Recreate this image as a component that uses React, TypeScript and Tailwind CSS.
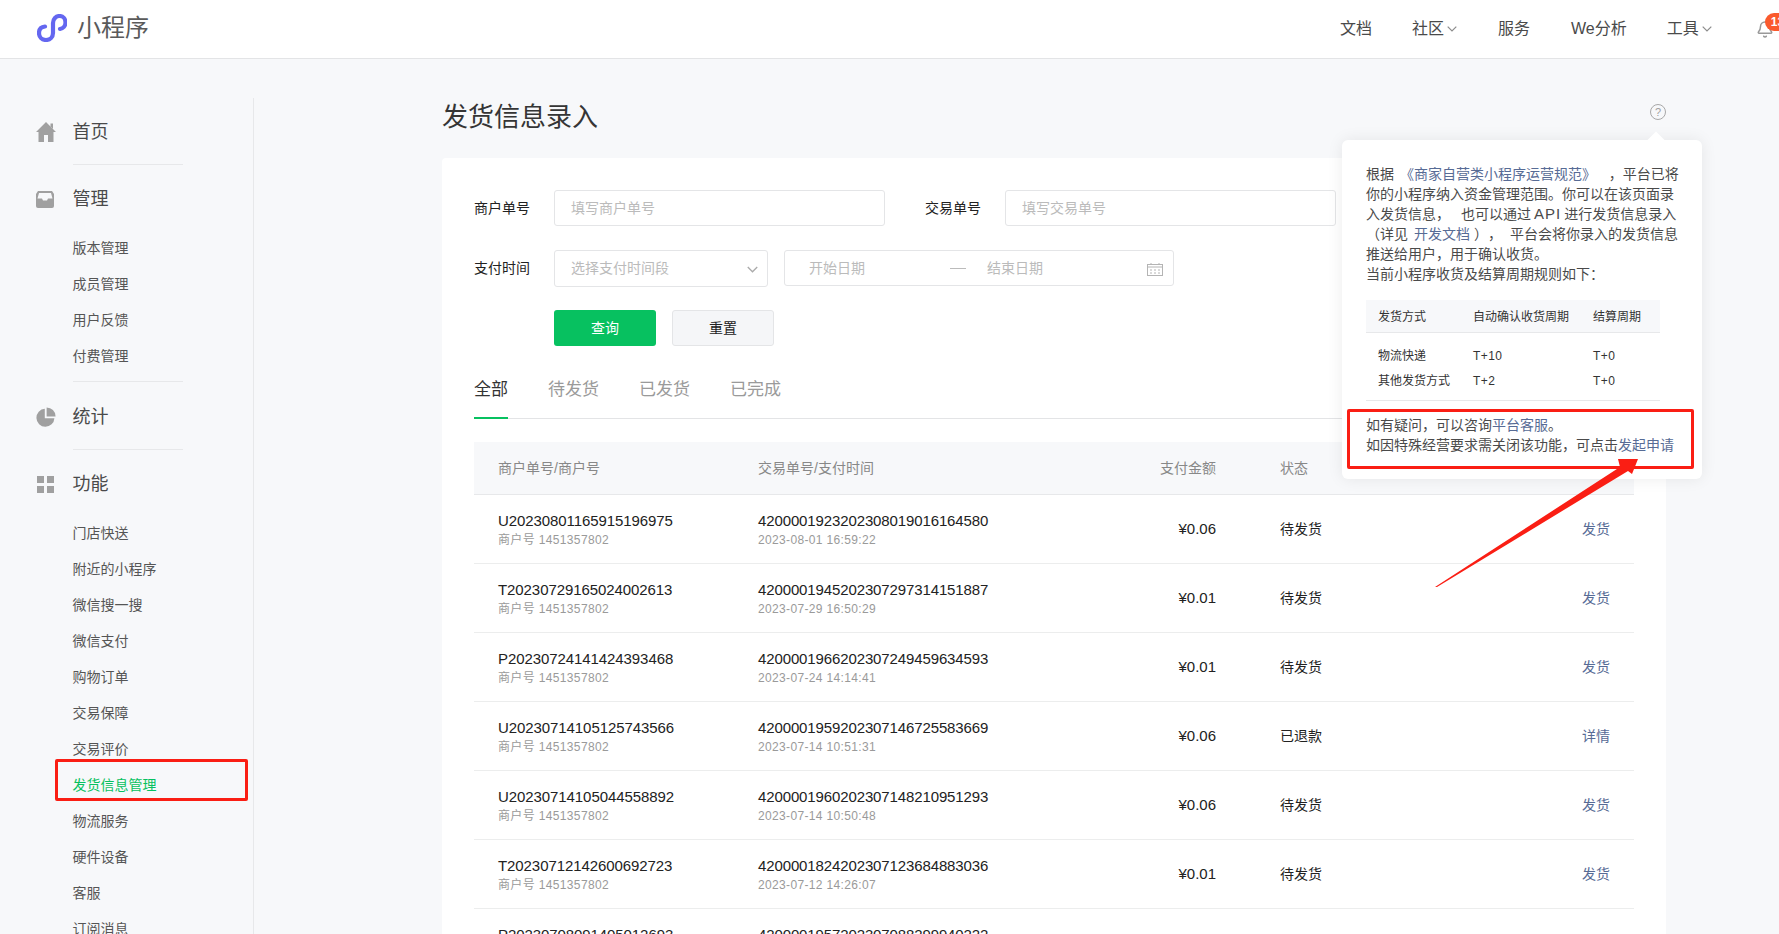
import React from 'react';
import { Bell } from 'lucide-react';

const Chevron: React.FC<{ className?: string }> = ({ className }) => (
  <svg viewBox="0 0 10 6" fill="none" stroke="currentColor" strokeWidth="1.2" className={className}>
    <path d="M0.7 0.7 L5 5 L9.3 0.7" />
  </svg>
);

const Logo = () => (
  <svg viewBox="0 0 30 28" fill="none" stroke="#6467f0" strokeWidth="4.2" strokeLinecap="round" className="w-[30px] h-[28px]">
    <path d="M8 12.5 C3.5 13 2 16 2 19 C2 23 5 26 9 26 C13 26 16 23 16 19 L16 9 C16 5 19 2 22.5 2 C26 2 28.5 5 28.5 8.5 C28.5 12 26 14.5 23 15" />
  </svg>
);

const HomeIcon = () => (
  <svg viewBox="0 0 20 20" className="w-5 h-5 fill-[#a0a0a0]">
    <path d="M10 0 L20 10 H17.5 V20 H12 V13 H8 V20 H2.5 V10 H0 Z" />
    <path d="M14.5 1.5 H17 V7 L14.5 4.5 Z" />
  </svg>
);

const InboxIcon = () => (
  <svg viewBox="0 0 18 17" className="w-[18px] h-[17px]">
    <path className="fill-[#a0a0a0]" d="M2 0 H16 L18 3 V15 A2 2 0 0 1 16 17 H2 A2 2 0 0 1 0 15 V3 Z" />
    <path className="fill-[#f7f8fa]" d="M3 2 H15 L16.5 7.5 H12 L11 9.5 H7 L6 7.5 H1.5 Z" />
  </svg>
);

const PieIcon = () => (
  <svg viewBox="0 0 20 20" className="w-5 h-5 fill-[#a0a0a0]">
    <path d="M8.8 1.8 A9 9 0 1 0 18.4 11.2 H8.8 Z" />
    <path d="M10.6 0.4 A9 9 0 0 1 19.6 9.4 H10.6 Z" />
  </svg>
);

const GridIcon = () => (
  <div className="grid grid-cols-2 gap-[3px] w-[17px] ml-px">
    <span className="h-[7px] bg-[#a0a0a0]" />
    <span className="h-[7px] bg-[#a0a0a0]" />
    <span className="h-[7px] bg-[#a0a0a0]" />
    <span className="h-[7px] bg-[#a0a0a0]" />
  </div>
);

const CalendarIcon = () => (
  <svg viewBox="0 0 16 13" fill="none" stroke="#b4b4b4" className="w-4 h-[13px]">
    <rect x="0.5" y="1.5" width="15" height="11" />
    <path d="M0.5 4 H15.5 M4 0 V2 M12 0 V2" />
    <path d="M3 7 H5 M7 7 H9 M11 7 H13 M3 10 H5 M7 10 H9 M11 10 H13" />
  </svg>
);

const NavHead: React.FC<{ icon: React.ReactNode; label: string }> = ({ icon, label }) => (
  <div className="flex items-center h-9">
    <div className="w-[37.5px] pl-px flex items-center justify-start">{icon}</div>
    <span className="text-[18px] text-[#4a4a4a]">{label}</span>
  </div>
);

const SubItem: React.FC<{ label: string; active?: boolean }> = ({ label, active }) => (
  <div className={`h-9 pl-[37.5px] leading-9 text-[14px] ${active ? 'text-[#07c160]' : 'text-[#555]'}`}>{label}</div>
);

const Divider: React.FC<{ className?: string }> = ({ className }) => (
  <div className={`ml-[38px] w-[110px] h-px bg-[#e7e8ea] ${className || ''}`} />
);

const Sidebar = () => (
  <aside className="w-[254px] mt-[39px] shrink-0 border-r border-[#e7e8ea] pl-[35px] pt-4">
    <NavHead icon={<HomeIcon />} label="首页" />
    <Divider className="mt-[14px] mb-4" />
    <NavHead icon={<InboxIcon />} label="管理" />
    <div className="mt-[13px]">
      {['版本管理', '成员管理', '用户反馈', '付费管理'].map((s) => (
        <SubItem key={s} label={s} />
      ))}
    </div>
    <Divider className="mt-[7px] mb-[17px]" />
    <NavHead icon={<PieIcon />} label="统计" />
    <Divider className="mt-[14px] mb-4" />
    <NavHead icon={<GridIcon />} label="功能" />
    <div className="mt-[13px]">
      {['门店快送', '附近的小程序', '微信搜一搜', '微信支付', '购物订单', '交易保障', '交易评价'].map((s) => (
        <SubItem key={s} label={s} />
      ))}
      <SubItem label="发货信息管理" active />
      {['物流服务', '硬件设备', '客服', '订阅消息'].map((s) => (
        <SubItem key={s} label={s} />
      ))}
    </div>
  </aside>
);

const Header = () => (
  <header className="h-[59px] shrink-0 bg-white border-b border-[#e3e4e6] flex items-center relative overflow-hidden">
    <div className="ml-[37px] mt-[-2px]"><Logo /></div>
    <span className="ml-[10px] text-[24px] text-[#5a5a5a] leading-none mt-[-2px]">小程序</span>
    <nav className="absolute left-0 right-0 top-0 h-[58px] flex items-center text-[16px] text-[#4a4a4a]">
      <span className="ml-[1340px]">文档</span>
      <span className="ml-10">社区</span>
      <Chevron className="ml-[3px] w-[10px] h-[6px] text-[#8c8c8c]" />
      <span className="ml-[41px]">服务</span>
      <span className="ml-[41px]">We分析</span>
      <span className="ml-10">工具</span>
      <Chevron className="ml-[3px] w-[10px] h-[6px] text-[#8c8c8c]" />
      <div className="ml-[44px] relative">
        <Bell className="w-[18px] h-[19px] text-[#999]" strokeWidth={2} />
        <span className="absolute left-[9px] top-[-7px] w-[28px] h-[18px] rounded-full bg-[#fa5a2d] text-white text-[12px] font-bold leading-[18px] pl-[6px]">13</span>
      </div>
    </nav>
  </header>
);

const rows = [
  ['U20230801165915196975', '4200001923202308019016164580', '2023-08-01 16:59:22', '¥0.06', '待发货', '发货'],
  ['T20230729165024002613', '4200001945202307297314151887', '2023-07-29 16:50:29', '¥0.01', '待发货', '发货'],
  ['P20230724141424393468', '4200001966202307249459634593', '2023-07-24 14:14:41', '¥0.01', '待发货', '发货'],
  ['U20230714105125743566', '4200001959202307146725583669', '2023-07-14 10:51:31', '¥0.06', '已退款', '详情'],
  ['U20230714105044558892', '4200001960202307148210951293', '2023-07-14 10:50:48', '¥0.06', '待发货', '发货'],
  ['T20230712142600692723', '4200001824202307123684883036', '2023-07-12 14:26:07', '¥0.01', '待发货', '发货'],
  ['P20230708091405012693', '4200001957202307088299940222', '2023-07-08 09:14:05', '¥0.01', '待发货', '发货'],
];

const Input: React.FC<{ placeholder: string }> = ({ placeholder }) => (
  <div className="w-[331px] h-9 border border-[#e4e5e7] rounded-[3px] pl-4 leading-[34px] text-[14px] text-[#bbb]">{placeholder}</div>
);

const Main = () => (
  <main className="flex-1 min-w-0 pl-[188px] pr-[113px]">
    <div className="h-[99px] flex items-start pt-[40px] justify-between">
      <h1 className="text-[26px] leading-9 text-[#353535]">发货信息录入</h1>
      <div className="mt-[5px] w-4 h-4 rounded-full border border-[#a8a8a8] text-[#a0a0a0] text-[11px] leading-[14px] text-center">?</div>
    </div>
    <section className="bg-white rounded-[4px] px-8 pt-8 h-[900px]">
      <div className="flex items-center">
        <label className="w-20 text-[14px] text-[#222]">商户单号</label>
        <Input placeholder="填写商户单号" />
        <label className="ml-10 w-20 text-[14px] text-[#222]">交易单号</label>
        <Input placeholder="填写交易单号" />
      </div>
      <div className="flex items-start mt-6">
        <label className="w-20 text-[14px] text-[#222] leading-9">支付时间</label>
        <div className="w-[214px] h-[37px] border border-[#e4e5e7] rounded-[3px] pl-4 pr-[9px] flex items-center justify-between text-[14px] text-[#bbb]">
          <span>选择支付时间段</span>
          <Chevron className="w-[11px] h-[7px] mt-[2px] text-[#aaa]" />
        </div>
        <div className="ml-4 w-[390px] h-9 border border-[#e4e5e7] rounded-[3px] flex items-center text-[14px] text-[#bbb]">
          <span className="ml-6">开始日期</span>
          <span className="ml-[85px] w-4 h-px bg-[#bbb]" />
          <span className="ml-[21px]">结束日期</span>
          <span className="ml-auto mr-[10px] mt-[3px]"><CalendarIcon /></span>
        </div>
      </div>
      <div className="flex gap-4 pl-20 mt-[23px]">
        <button className="w-[102px] h-9 rounded-[3px] bg-[#07c160] text-white text-[14px]">查询</button>
        <button className="w-[102px] h-9 rounded-[3px] bg-[#f5f6f8] border border-[#e4e5e7] text-[#222] text-[14px]">重置</button>
      </div>
      <div className="mt-[25px] flex gap-10 border-b border-[#e3e4e6] text-[17px] leading-6 h-[48px] text-[#9a9a9a]">
        <span className="h-[48px] pt-[7px] border-b-2 border-[#07c160] text-[#333]">全部</span>
        <span className="pt-[7px]">待发货</span>
        <span className="pt-[7px]">已发货</span>
        <span className="pt-[7px]">已完成</span>
      </div>
      <div className="mt-[23px]">
        <div className="h-[53px] bg-[#f7f8fa] border-b border-[#e7e8ea] pl-6 pr-6 flex items-center text-[14px] text-[#888]">
          <span className="w-[260px]">商户单号/商户号</span>
          <span className="w-[458px] flex justify-between">交易单号/支付时间<span>支付金额</span></span>
          <span className="ml-16">状态</span>
        </div>
        {rows.map((r) => (
          <div key={r[0]} className="h-[69px] shrink-0 border-b border-[#eceded] pl-6 pr-6 flex items-start">
            <div className="w-[260px] pt-4">
              <div className="text-[15px] leading-5 tracking-[-0.08px] text-[#222]">{r[0]}</div>
              <div className="text-[12px] leading-[18px] tracking-[0.35px] text-[#9a9a9a]">商户号 1451357802</div>
            </div>
            <div className="w-[458px] flex justify-between">
              <div className="pt-4">
                <div className="text-[15px] leading-5 tracking-[-0.12px] text-[#222]">{r[1]}</div>
                <div className="text-[12px] leading-[18px] tracking-[0.35px] text-[#9a9a9a]">{r[2]}</div>
              </div>
              <div className="pt-6 text-[15px] leading-5 text-[#222]">{r[3]}</div>
            </div>
            <div className="ml-16 pt-6 text-[14px] leading-5 text-[#222]">{r[4]}</div>
            <div className="ml-auto pt-6 text-[14px] leading-5 text-[#576b95]">{r[5]}</div>
          </div>
        ))}
      </div>
    </section>
  </main>
);

const Link: React.FC<{ className?: string; children: React.ReactNode }> = ({ className, children }) => (
  <span className={`text-[#576b95] ${className || ''}`}>{children}</span>
);

const Popover = () => (
  <div className="absolute left-[1342px] top-[140px] w-[360px] h-[339px] bg-white rounded-[6px] shadow-[0_0_16px_rgba(0,0,0,0.08)] pl-6 pr-5 pt-6 text-[14px] leading-5 text-[#4a4a4a] [text-spacing-trim:space-all]">
    <span className="absolute right-[40px] top-[-6px] w-3 h-3 rotate-45 bg-white" />
    <p>
      根据 <Link className="ml-[2px] mr-[9px]">《商家自营类小程序运营规范》</Link> ，平台已将你的小程序纳入资金管理范围。你可以在该页面录入发货信息，<span className="ml-[11px]">也可以通过</span><span className="mx-[3px] text-[15px] tracking-[1px]">API</span>进行发货信息录入（详见 <Link className="ml-[2px]">开发文档</Link><span className="ml-[4px]">）</span><span className="mr-[8px]">，</span>平台会将你录入的发货信息<br />推送给用户，用于确认收货。
    </p>
    <p>当前小程序收货及结算周期规则如下：</p>
    <div className="mt-4 w-[294px] text-[12px] text-[#333] border-b border-[#e7e8ea] pb-[7px]">
      <div className="flex items-center h-[33px] pt-px bg-[#f7f8fa] border-b border-[#e7e8ea] pl-3 mb-[10px]">
        <span className="w-[95px]">发货方式</span>
        <span className="w-[120px]">自动确认收货周期</span>
        <span>结算周期</span>
      </div>
      <div className="flex items-center h-[25px] pl-3">
        <span className="w-[95px]">物流快递</span>
        <span className="w-[120px] tracking-[0.4px]">T+10</span>
        <span className="tracking-[0.4px]">T+0</span>
      </div>
      <div className="flex items-center h-[25px] pl-3">
        <span className="w-[95px]">其他发货方式</span>
        <span className="w-[120px] tracking-[0.4px]">T+2</span>
        <span className="tracking-[0.4px]">T+0</span>
      </div>
    </div>
    <p className="mt-[14px]">如有疑问，可以咨询<Link>平台客服</Link>。</p>
    <p className="whitespace-nowrap">如因特殊经营要求需关闭该功能，可点击<Link>发起申请</Link></p>
  </div>
);

export default function App() {
  return (
    <div className="relative w-[1779px] h-[934px] overflow-hidden bg-[#f7f8fa] flex flex-col font-['Liberation_Sans','Noto_Sans_CJK_SC',sans-serif]">
      <Header />
      <div className="flex flex-1 min-h-0">
        <Sidebar />
        <Main />
      </div>
      <Popover />
      {/* red annotations drawn on the screenshot */}
      <div className="absolute left-[55px] top-[759px] w-[193px] h-[42px] border-[3px] border-[#fa1e14] rounded-[2px]" />
      <div className="absolute left-[1347px] top-[409px] w-[347px] h-[60px] border-[3px] border-[#fa1e14] rounded-[2px]" />
      <svg className="absolute left-[1430px] top-[455px] w-[215px] h-[135px]" viewBox="0 0 215 135">
        <path className="fill-[#fa1e14]" d="M5 132 L190 12 L188 4 L208 4 L202 19 L198 16 L7 132 Z" />
      </svg>
    </div>
  );
}
